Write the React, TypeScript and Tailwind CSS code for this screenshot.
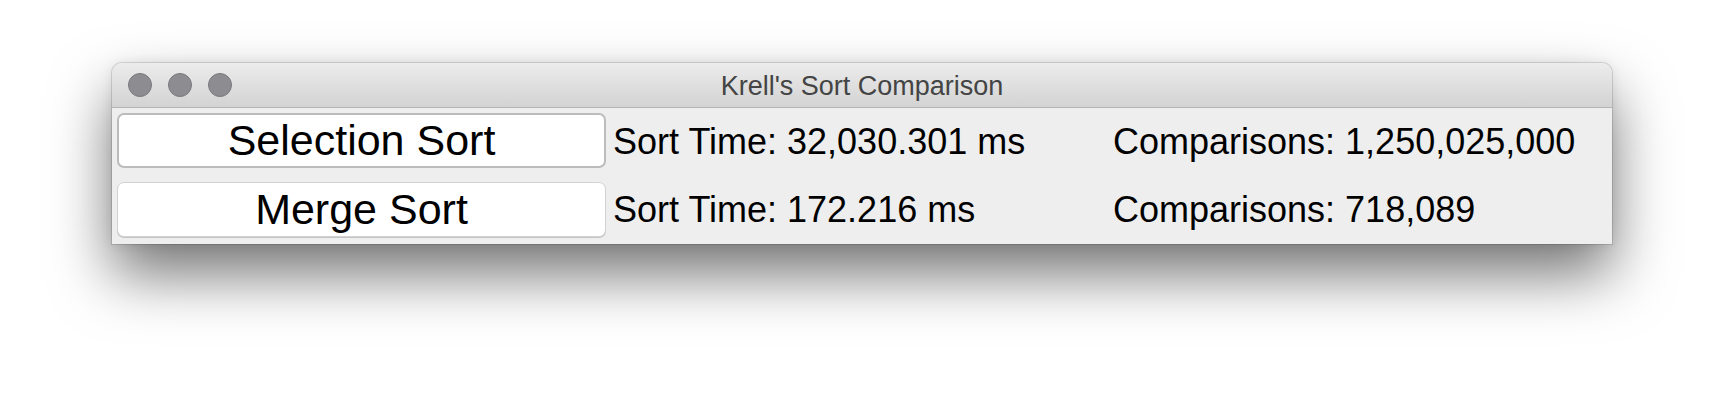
import React from "react";

const rows = [
  { name: "Selection Sort", time: "Sort Time: 32,030.301 ms", comps: "Comparisons: 1,250,025,000", focused: true },
  { name: "Merge Sort", time: "Sort Time: 172.216 ms", comps: "Comparisons: 718,089", focused: false },
];

export default function App() {
  return (
    <div
      className="w-[1724px] h-[404px] bg-white pt-[63px] pl-[112px] overflow-hidden"
      style={{ fontFamily: '"Liberation Sans", Arial, sans-serif' }}
    >
      <div className="w-[1500px] rounded-t-[10px] bg-[#eeeeee] shadow-[0_0_0_1px_rgba(0,0,0,0.12),0_0_12px_rgba(0,0,0,0.08),0_30px_60px_0_rgba(0,0,0,0.55)]">
        <div className="h-[45px] grid grid-cols-[1fr_auto_1fr] items-center rounded-t-[10px] border-b border-[#b4b4b4] bg-gradient-to-b from-[#ececec] to-[#d3d3d3]">
          <div className="flex gap-[16px] pl-[16px]">
            <span className="w-[24px] h-[24px] rounded-full bg-[#8d8d91] border border-[#7a7a7e]" />
            <span className="w-[24px] h-[24px] rounded-full bg-[#8d8d91] border border-[#7a7a7e]" />
            <span className="w-[24px] h-[24px] rounded-full bg-[#8d8d91] border border-[#7a7a7e]" />
          </div>
          <div className="text-[27px] text-[#444444] leading-none pt-[2px]">Krell's Sort Comparison</div>
          <div />
        </div>
        <div className="grid grid-cols-3 grid-rows-[68px_68px] h-[136px]">
          {rows.map((r, i) => (
            <React.Fragment key={r.name}>
              <div className={`pl-[5px] pr-[6px] ${i === 0 ? "pt-[5px]" : "pt-[6px]"}`}>
                <button
                  className={`w-full h-[55px] flex items-center justify-center rounded-[7px] bg-white text-black text-[43px] leading-none ${
                    r.focused
                      ? "border-2 border-[#bcbcbc]"
                      : "border border-[#d2d2d2] shadow-[0_1px_0_#c4c4c4]"
                  }`}
                >
                  {r.name}
                </button>
              </div>
              <div className="flex items-center pl-[1px] text-[36px] text-black leading-none">{r.time}</div>
              <div className="flex items-center pl-[1px] text-[36px] text-black leading-none">{r.comps}</div>
            </React.Fragment>
          ))}
        </div>
      </div>
    </div>
  );
}
